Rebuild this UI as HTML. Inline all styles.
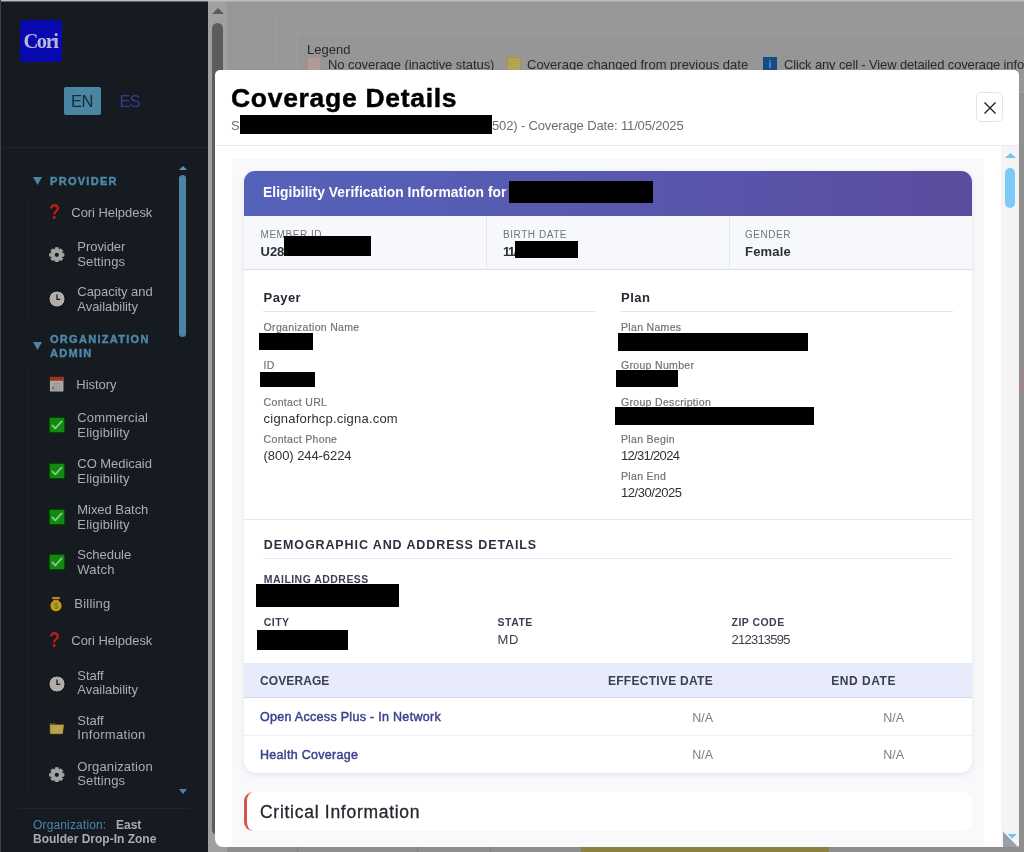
<!DOCTYPE html>
<html lang="en">
<head>
<meta charset="utf-8">
<title>Coverage Details</title>
<style>
*{box-sizing:border-box;margin:0;padding:0}
html,body{width:1024px;height:852px;overflow:hidden;background:#939393;font-family:"Liberation Sans",sans-serif;}
.abs,.t{position:absolute;white-space:nowrap}
.t{line-height:1;}
#stage{will-change:transform;position:relative;width:1024px;height:852px;overflow:hidden;background:#939393}
/* ---------- sidebar ---------- */
#side{position:absolute;left:0;top:0;width:208px;height:852px;background:#161b22}
#side .nav{color:#abadaf;font-size:13px;letter-spacing:-.05px;margin-top:-.5px;margin-left:.3px}
#side .sec{color:#4d88a5;font-weight:bold;font-size:11px;letter-spacing:1.3px;-webkit-text-stroke:.45px #4d88a5}
/* ---------- main bg ---------- */
#main{position:absolute;left:208px;top:0;width:816px;height:852px;background:#979797}
.bgt{color:#2a2a2a;font-size:13px}
/* ---------- modal ---------- */
#modal{position:absolute;left:215px;top:70px;width:804px;height:777px;background:#fff;border-radius:5px 5px 3px 8px;overflow:hidden}
.lbl{color:#6e737a;font-size:10.5px;letter-spacing:.32px;-webkit-text-stroke:.2px #6e737a}
.val{color:#2d3037;font-size:13px;letter-spacing:.2px}
.cap{color:#3a4152;font-size:10.5px;font-weight:bold;letter-spacing:.45px}
.red{position:absolute;background:#000}
.th{color:#3a4050;font-size:12px;font-weight:bold;letter-spacing:.55px}
.cv{color:#3c408a;font-size:12.5px;font-weight:normal;letter-spacing:.3px;-webkit-text-stroke:.45px #3c408a}
.na{color:#7a7f88;font-size:12.5px}
</style>
</head>
<body>
<div id="stage">

<!-- ================= MAIN BACKGROUND (dimmed page) ================= -->
<div id="main">
  <div class="abs" style="left:0;top:0;width:19px;height:852px;background:#a0a0a0"></div>
  <div class="abs" style="left:4px;top:23px;width:11px;height:812px;background:#5c5c5c;border-radius:5.5px"></div>
  <svg class="abs" style="left:3.5px;top:8px" width="12" height="6"><path d="M0 6 L6 0 L12 6Z" fill="#5c5c5c"/></svg>
  <div class="abs" style="left:68px;top:11px;width:760px;height:1px;background:#9b9b9b"></div>
  <div class="abs" style="left:68px;top:11px;width:1px;height:60px;background:#9b9b9b"></div>
  <!-- bottom strip peeking below modal -->
  <div class="abs" style="left:19px;top:847px;width:797px;height:5px;background:#8e8e8e"></div>
  <div class="abs" style="left:373px;top:847px;width:248px;height:5px;background:#8b8141"></div>
  <div class="abs" style="left:89px;top:847px;width:1px;height:5px;background:#808080"></div>
  <div class="abs" style="left:209px;top:847px;width:1px;height:5px;background:#808080"></div>
  <div class="abs" style="left:282px;top:847px;width:1px;height:5px;background:#808080"></div>
  <!-- right strip peeking beside modal -->
  <div class="abs" style="left:811px;top:93px;width:5px;height:754px;background:#8f8f8f"></div>
  <div class="abs" style="left:811px;top:364px;width:5px;height:28px;background:#9b8a8a"></div>
  <!-- legend box -->
  <div class="abs" style="left:89px;top:33px;width:740px;height:60px;border:1px solid #9e9e9e;background:#969696"></div>
  <div class="t bgt" style="left:99px;top:43px">Legend</div>
  <div class="abs" style="left:99px;top:57px;width:14px;height:14px;background:#b39a9a;border:1px solid #a58f8f"></div>
  <div class="t bgt" style="left:120px;top:58px;letter-spacing:-.07px">No coverage (inactive status)</div>
  <div class="abs" style="left:299px;top:57px;width:14px;height:14px;background:#b3a455;border:1px solid #a39649"></div>
  <div class="t bgt" style="left:319px;top:58px">Coverage changed from previous date</div>
  <div class="abs" style="left:555px;top:57px;width:14px;height:14px;background:#134c86"></div>
  <div class="t" style="left:560.5px;top:59px;font-size:11px;font-weight:bold;color:#5f8fc0">i</div>
  <div class="t bgt" style="left:576px;top:58px;letter-spacing:-.14px">Click any cell - View detailed coverage information</div>
</div>

<!-- ================= SIDEBAR ================= -->
<div id="side">
  <div class="abs" style="left:20px;top:20px;width:42px;height:42px;background:#0909b0;border-radius:4px"></div>
  <div class="t" style="left:23.400px;top:31px;font-family:'Liberation Serif',serif;font-weight:bold;font-size:20.5px;color:#b9b9da;letter-spacing:-1.400px">Cori</div>
  <div class="abs" style="left:64px;top:87px;width:37px;height:28px;background:#4a86a4;border-radius:2px"></div>
  <div class="t" style="left:71px;top:93px;font-size:16.5px;color:#1b2838;letter-spacing:-.4px">EN</div>
  <div class="t" style="left:119.5px;top:93px;font-size:16.5px;color:#3a3a8c;letter-spacing:-1px">ES</div>
  <div class="abs" style="left:0;top:147px;width:208px;height:1px;background:#1e242c"></div>

  <div class="abs" style="left:27px;top:196px;width:1px;height:125px;background:#1a2028"></div>
  <div class="abs" style="left:27px;top:368px;width:1px;height:428px;background:#1a2028"></div>
  <!-- inner scrollbar -->
  <svg class="abs" style="left:179px;top:165.500px" width="8" height="4"><path d="M0 4 L4 0 L8 4Z" fill="#5f95b0"/></svg>
  <div class="abs" style="left:179px;top:175px;width:7px;height:162px;background:#4a86a4;border-radius:4px"></div>
  <svg class="abs" style="left:179px;top:789px" width="8" height="5"><path d="M0 0 L4 5 L8 0Z" fill="#4a86a4"/></svg>

  <!-- PROVIDER -->
  <svg class="abs" style="left:33px;top:177px" width="9" height="8"><path d="M0 0 L9 0 L4.5 8Z" fill="#4a86a4"/></svg>
  <div class="t sec" style="left:50px;top:176.300px">PROVIDER</div>

  <div class="t nav" style="left:71px;top:206px">Cori Helpdesk</div>
  <div class="t nav" style="left:77px;top:240px">Provider</div>
  <div class="t nav" style="left:77px;top:255px;letter-spacing:.1px">Settings</div>
  <div class="t nav" style="left:77px;top:285px">Capacity and</div>
  <div class="t nav" style="left:77px;top:300px">Availability</div>

  <svg class="abs" style="left:33px;top:342px" width="9" height="8"><path d="M0 0 L9 0 L4.5 8Z" fill="#4a86a4"/></svg>
  <div class="t sec" style="left:50px;top:334.200px">ORGANIZATION</div>
  <div class="t sec" style="left:50px;top:348px">ADMIN</div>

  <div class="t nav" style="left:76px;top:378px">History</div>
  <div class="t nav" style="left:77px;top:411px;letter-spacing:0.15px">Commercial</div>
  <div class="t nav" style="left:77px;top:426px;letter-spacing:0.17px">Eligibility</div>
  <div class="t nav" style="left:77px;top:457px">CO Medicaid</div>
  <div class="t nav" style="left:77px;top:472px;letter-spacing:0.17px">Eligibility</div>
  <div class="t nav" style="left:77px;top:503px">Mixed Batch</div>
  <div class="t nav" style="left:77px;top:518px;letter-spacing:0.17px">Eligibility</div>
  <div class="t nav" style="left:77px;top:548px">Schedule</div>
  <div class="t nav" style="left:77px;top:563px;letter-spacing:0.2px">Watch</div>
  <div class="t nav" style="left:74px;top:597px;letter-spacing:0.22px">Billing</div>
  <div class="t nav" style="left:71px;top:634px">Cori Helpdesk</div>
  <div class="t nav" style="left:77px;top:669px">Staff</div>
  <div class="t nav" style="left:77px;top:683px">Availability</div>
  <div class="t nav" style="left:77px;top:714px">Staff</div>
  <div class="t nav" style="left:77px;top:728px;letter-spacing:0.3px">Information</div>
  <div class="t nav" style="left:77px;top:760px;letter-spacing:0.15px">Organization</div>
  <div class="t nav" style="left:77px;top:774px;letter-spacing:.1px">Settings</div>


  <!-- icons -->
  <div class="t" style="left:48.5px;top:201.5px;font-size:21.5px;font-weight:bold;color:#b3201d;text-shadow:0 0 1.5px #400;transform:scaleX(.84);transform-origin:0 0">?</div>
  <svg class="abs" style="left:49.2px;top:246.7px" width="15.6" height="15.6" viewBox="0 0 17 17"><path d="M16.25 6.96 L16.25 10.04 L14.60 10.07 L13.92 11.71 L15.07 12.89 L12.89 15.07 L11.71 13.92 L10.07 14.60 L10.04 16.25 L6.96 16.25 L6.93 14.60 L5.29 13.92 L4.11 15.07 L1.93 12.89 L3.08 11.71 L2.40 10.07 L0.75 10.04 L0.75 6.96 L2.40 6.93 L3.08 5.29 L1.93 4.11 L4.11 1.93 L5.29 3.08 L6.93 2.40 L6.96 0.75 L10.04 0.75 L10.07 2.40 L11.71 3.08 L12.89 1.93 L15.07 4.11 L13.92 5.29 L14.60 6.93Z" fill="#a3a3a3" stroke="#a3a3a3" stroke-width="1" stroke-linejoin="round"/><circle cx="8.5" cy="8.5" r="2.3" fill="#14171c"/></svg>
  <svg class="abs" style="left:48px;top:290.2px" width="18" height="18" viewBox="0 0 18 18"><circle cx="9" cy="9" r="8.1" fill="#b2acaa" stroke="#0b0d10" stroke-width="1"/><path d="M9 4.600 V9.300 H12.200" stroke="#1a1a1a" stroke-width="1.3" fill="none"/></svg>
  <svg class="abs" style="left:49.3px;top:376.300px" width="15.400" height="16.400" viewBox="0 0 16 17"><rect x=".5" y=".5" width="15" height="16" rx="1.200" fill="#a9a9a9" stroke="#0f1114" stroke-width=".8"/><path d="M.9 1.700 Q.9 .9 1.700 .9 H14.300 Q15.100 .9 15.100 1.700 V5 H.9Z" fill="#a2301d"/><path d="M3 8.300 H13 M3 11 H13 M3 13.800 H13 M5.600 6.300 V15 M8.300 6.300 V15 M11 6.300 V15" stroke="#939393" stroke-width=".7"/><rect x="3.200" y="11.300" width="2.200" height="2.200" fill="#6c6c6c"/></svg>
  <svg class="abs" style="left:48.400px;top:415.900px" width="18" height="18" viewBox="0 0 18 18"><rect x=".9" y=".9" width="16.200" height="16.200" rx="1" fill="#128a12" stroke="#052c05" stroke-width="1.500"/><path d="M4.400 9.300 L7.300 12.300 L13.700 5.400" stroke="#8acb8a" stroke-width="1.700" fill="none" stroke-linecap="round" stroke-linejoin="round"/></svg>
  <svg class="abs" style="left:48.400px;top:461.900px" width="18" height="18" viewBox="0 0 18 18"><rect x=".9" y=".9" width="16.200" height="16.200" rx="1" fill="#128a12" stroke="#052c05" stroke-width="1.500"/><path d="M4.400 9.300 L7.300 12.300 L13.700 5.400" stroke="#8acb8a" stroke-width="1.700" fill="none" stroke-linecap="round" stroke-linejoin="round"/></svg>
  <svg class="abs" style="left:48.400px;top:507.900px" width="18" height="18" viewBox="0 0 18 18"><rect x=".9" y=".9" width="16.200" height="16.200" rx="1" fill="#128a12" stroke="#052c05" stroke-width="1.500"/><path d="M4.400 9.300 L7.300 12.300 L13.700 5.400" stroke="#8acb8a" stroke-width="1.700" fill="none" stroke-linecap="round" stroke-linejoin="round"/></svg>
  <svg class="abs" style="left:48.400px;top:553px" width="18" height="18" viewBox="0 0 18 18"><rect x=".9" y=".9" width="16.200" height="16.200" rx="1" fill="#128a12" stroke="#052c05" stroke-width="1.500"/><path d="M4.400 9.300 L7.300 12.300 L13.700 5.400" stroke="#8acb8a" stroke-width="1.700" fill="none" stroke-linecap="round" stroke-linejoin="round"/></svg>
  <svg class="abs" style="left:48px;top:595px" width="16" height="19" viewBox="0 0 16 19"><circle cx="8" cy="10.800" r="6.200" fill="#c8991f" stroke="#1c1400" stroke-width="1.100"/><path d="M4.600 4.200 L5.700 6 H10.300 L11.400 4.200Z" fill="#b88a1a"/><rect x="3.800" y="1.700" width="8.400" height="2.600" rx=".8" fill="#c9ab4e" stroke="#1c1400" stroke-width=".9"/><text x="8" y="13.900" font-family="Liberation Sans, sans-serif" font-weight="bold" font-size="8.500" text-anchor="middle" fill="#5d8a18">$</text></svg>
  <div class="t" style="left:48.5px;top:629.5px;font-size:21.5px;font-weight:bold;color:#b3201d;text-shadow:0 0 1.5px #400;transform:scaleX(.84);transform-origin:0 0">?</div>
  <svg class="abs" style="left:48px;top:674.7px" width="18" height="18" viewBox="0 0 18 18"><circle cx="9" cy="9" r="8.1" fill="#b2acaa" stroke="#0b0d10" stroke-width="1"/><path d="M9 4.600 V9.300 H12.200" stroke="#1a1a1a" stroke-width="1.3" fill="none"/></svg>
  <svg class="abs" style="left:49px;top:723px" width="16" height="12" viewBox="0 0 16 12"><path d="M.6 .6 H6 L7.2 1.800 H14.6 V3 H.6Z" fill="#a88c32"/><path d="M.5 1.2 H15.4 L14 11.3 H.8Z" fill="#b7a248" stroke="#15130c" stroke-width=".7"/><path d="M4 4 L11 3.600 L10.400 8.600 L4.600 8.800Z" fill="#bfa64f" opacity=".8"/></svg>
  <svg class="abs" style="left:49.2px;top:766.7px" width="15.6" height="15.6" viewBox="0 0 17 17"><path d="M16.25 6.96 L16.25 10.04 L14.60 10.07 L13.92 11.71 L15.07 12.89 L12.89 15.07 L11.71 13.92 L10.07 14.60 L10.04 16.25 L6.96 16.25 L6.93 14.60 L5.29 13.92 L4.11 15.07 L1.93 12.89 L3.08 11.71 L2.40 10.07 L0.75 10.04 L0.75 6.96 L2.40 6.93 L3.08 5.29 L1.93 4.11 L4.11 1.93 L5.29 3.08 L6.93 2.40 L6.96 0.75 L10.04 0.75 L10.07 2.40 L11.71 3.08 L12.89 1.93 L15.07 4.11 L13.92 5.29 L14.60 6.93Z" fill="#a3a3a3" stroke="#a3a3a3" stroke-width="1" stroke-linejoin="round"/><circle cx="8.5" cy="8.5" r="2.3" fill="#14171c"/></svg>
  <div class="abs" style="left:18px;top:808px;width:172px;height:1px;background:#1e242c"></div>
  <div class="t" style="left:33px;top:819px;font-size:12px;color:#4a86a4;letter-spacing:.15px">Organization:</div>
  <div class="t" style="left:116px;top:819px;font-size:12px;color:#aaacae;font-weight:bold">East</div>
  <div class="t" style="left:33px;top:833px;font-size:12px;color:#aaacae;font-weight:bold">Boulder Drop-In Zone</div>
</div>

<div class="abs" style="left:0;top:0;width:1024px;height:1px;background:#b9c0b9"></div>
<div class="abs" style="left:0;top:1px;width:1024px;height:1px;background:rgba(185,192,185,.45)"></div>
<div class="abs" style="left:0;top:0;width:1px;height:852px;background:#3d4249"></div>

<!-- ================= MODAL ================= -->
<div id="modal">
  <!-- header -->
  <div class="t" id="ttl" style="left:16px;top:14.5px;font-size:26.5px;font-weight:bold;color:#000;letter-spacing:.7px;-webkit-text-stroke:.45px #000">Coverage Details</div>
  <div class="t" style="left:16px;top:49px;font-size:13px;color:#6e6e6e">S</div>
  <div class="red" style="left:25px;top:45px;width:252px;height:19px"></div>
  <div class="t" id="sub" style="left:277px;top:49px;font-size:13px;color:#6e6e6e;letter-spacing:-.15px">502) - Coverage Date: 11/05/2025</div>
  <div class="abs" style="left:761px;top:22px;width:27px;height:30px;border:1px solid #e4e4e4;border-radius:5px;background:#fff"></div>
  <svg class="abs" style="left:769px;top:32px" width="12" height="12" viewBox="0 0 12 12"><path d="M0.5 0.5 L11.5 11.5 M11.5 0.5 L0.5 11.5" stroke="#222" stroke-width="1.4" fill="none"/></svg>
  <div class="abs" style="left:0;top:75px;width:804px;height:1px;background:#e9e9e9"></div>

  <!-- scroll track -->
  <div class="abs" style="left:786px;top:76px;width:18px;height:701px;background:#f4f4f4"></div>
  <svg class="abs" style="left:790px;top:83px" width="11" height="5"><path d="M0 5 L5.5 0 L11 5Z" fill="#6fc5ef"/></svg>
  <div class="abs" style="left:790px;top:98px;width:10px;height:40px;background:#7ccbf6;border-radius:5px"></div>
  <svg class="abs" style="left:787px;top:756px" width="17" height="21"><path d="M1 5.500 L1 21 L16 21Z" fill="#9a9fb0"/><path d="M5.500 8 L15 8 L10.250 12.600Z" fill="#6fc5ef"/></svg>

  <!-- body bg -->
  <div class="abs" style="left:16.500px;top:89px;width:752.500px;height:688px;background:#f8f9fb"></div>

  <!-- main card -->
  <div class="abs" id="card" style="left:29px;top:101px;width:728px;height:602px;background:#fff;border-radius:11px;box-shadow:0 2px 6px rgba(40,50,90,.09),0 0 1px rgba(40,50,90,.15);overflow:hidden">
    <div class="abs" style="left:0;top:0;width:728px;height:45px;background:linear-gradient(90deg,#5562b9 0%,#5759af 50%,#5b4c9f 100%)"></div>
    <div class="t" id="ch" style="left:19px;top:15px;font-size:13.8px;font-weight:bold;color:#fff;letter-spacing:.05px">Eligibility Verification Information for</div>
    <div class="red" style="left:265px;top:10px;width:144px;height:22px"></div>

    <div class="abs" style="left:0;top:45px;width:728px;height:53px;background:#f7f8fc"></div>
    <div class="abs" style="left:0;top:98px;width:728px;height:1px;background:#d9ddee"></div>
    <div class="abs" style="left:242px;top:45px;width:1px;height:53px;background:#e4e7f2"></div>
    <div class="abs" style="left:485px;top:45px;width:1px;height:53px;background:#e4e7f2"></div>

    <div class="t" style="left:16.500px;top:59px;font-size:10px;color:#6f747d;letter-spacing:.55px">MEMBER ID</div>
    <div class="t" style="left:16.500px;top:73.5px;font-size:13px;color:#2a2f3a;font-weight:bold">U28</div>
    <div class="red" style="left:40px;top:65px;width:87px;height:20px"></div>
    <div class="t" style="left:259px;top:59px;font-size:10px;color:#6f747d;letter-spacing:.55px">BIRTH DATE</div>
    <div class="t" style="left:259px;top:73.5px;font-size:13px;color:#2a2f3a;font-weight:bold;letter-spacing:-1.5px">11/</div>
    <div class="red" style="left:271px;top:70px;width:63px;height:17px"></div>
    <div class="t" style="left:501px;top:59px;font-size:10px;color:#6f747d;letter-spacing:.55px">GENDER</div>
    <div class="t" style="left:501px;top:73.5px;font-size:13px;color:#2a2f3a;font-weight:bold;letter-spacing:.2px">Female</div>

    <!-- Payer -->
    <div class="t" style="left:19.600px;top:120px;font-size:13px;font-weight:bold;color:#252a36;letter-spacing:.4px">Payer</div>
    <div class="abs" style="left:19px;top:140px;width:332px;height:1px;background:#dfe4f0"></div>
    <div class="t lbl" style="left:19.600px;top:151px">Organization Name</div>
    <div class="red" style="left:15px;top:162px;width:54px;height:17px"></div>
    <div class="t lbl" style="left:19.600px;top:189px">ID</div>
    <div class="red" style="left:16px;top:201px;width:55px;height:15px"></div>
    <div class="t lbl" style="left:19.600px;top:226px">Contact URL</div>
    <div class="t val" style="left:19.600px;top:240.5px">cignaforhcp.cigna.com</div>
    <div class="t lbl" style="left:19.600px;top:263px">Contact Phone</div>
    <div class="t val" style="left:19.600px;top:278px;letter-spacing:-.07px">(800) 244-6224</div>

    <!-- Plan -->
    <div class="t" style="left:377px;top:120px;font-size:13px;font-weight:bold;color:#252a36;letter-spacing:.5px">Plan</div>
    <div class="abs" style="left:377px;top:140px;width:332px;height:1px;background:#dfe4f0"></div>
    <div class="t lbl" style="left:377px;top:151px">Plan Names</div>
    <div class="red" style="left:374px;top:162px;width:190px;height:18px"></div>
    <div class="t lbl" style="left:377px;top:189px">Group Number</div>
    <div class="red" style="left:372px;top:199px;width:62px;height:17px"></div>
    <div class="t lbl" style="left:377px;top:226px">Group Description</div>
    <div class="red" style="left:371px;top:236px;width:199px;height:18px"></div>
    <div class="t lbl" style="left:377px;top:263px">Plan Begin</div>
    <div class="t val" style="left:377px;top:278px;letter-spacing:-.68px">12/31/2024</div>
    <div class="t lbl" style="left:377px;top:300px">Plan End</div>
    <div class="t val" style="left:377px;top:315px;letter-spacing:-.45px">12/30/2025</div>

    <div class="abs" style="left:0;top:348px;width:728px;height:1px;background:#e4e7ef"></div>

    <!-- Demographic -->
    <div class="t" style="left:19.800px;top:367.7px;font-size:12.5px;font-weight:bold;color:#2b3040;letter-spacing:.9px">DEMOGRAPHIC AND ADDRESS DETAILS</div>
    <div class="abs" style="left:19px;top:387px;width:690px;height:1px;background:#e3e6f0"></div>
    <div class="t cap" style="left:19.800px;top:403px">MAILING ADDRESS</div>
    <div class="red" style="left:12px;top:413px;width:143px;height:23px"></div>
    <div class="t cap" style="left:19.800px;top:446px">CITY</div>
    <div class="red" style="left:13px;top:459px;width:91px;height:20px"></div>
    <div class="t cap" style="left:253.600px;top:446px">STATE</div>
    <div class="t val" style="left:253.600px;top:462.4px;color:#3a3f4a;letter-spacing:.6px">MD</div>
    <div class="t cap" style="left:487.600px;top:446px">ZIP CODE</div>
    <div class="t val" style="left:487.600px;top:462.4px;color:#3a3f4a;letter-spacing:-.78px">212313595</div>

    <!-- Coverage table -->
    <div class="abs" style="left:0;top:492px;width:728px;height:34px;background:#e8ebfb"></div>
    <div class="abs" style="left:0;top:526px;width:728px;height:1px;background:#d3d8f1"></div>
    <div class="t th" style="left:16px;top:504px;letter-spacing:.1px">COVERAGE</div>
    <div class="t th" style="right:259px;top:504px;letter-spacing:.28px">EFFECTIVE DATE</div>
    <div class="t th" style="right:76px;top:504px">END DATE</div>
    <div class="t cv" style="left:16px;top:540px">Open Access Plus - In Network</div>
    <div class="t na" style="right:259px;top:541px">N/A</div>
    <div class="t na" style="right:68px;top:541px">N/A</div>
    <div class="abs" style="left:0;top:564px;width:728px;height:1px;background:#f1f2f6"></div>
    <div class="t cv" style="left:16px;top:578px">Health Coverage</div>
    <div class="t na" style="right:259px;top:578px">N/A</div>
    <div class="t na" style="right:68px;top:578px">N/A</div>
  </div>

  <!-- Critical Information -->
  <div class="abs" style="left:29px;top:722px;width:728px;height:39px;background:#fff;border-radius:9px;border-left:3px solid #d9534f"></div>
  <div class="t" id="crit" style="left:45px;top:734.1px;font-size:17.5px;color:#23272f;letter-spacing:.72px;-webkit-text-stroke:.3px #23272f">Critical Information</div>
</div>

</div>
</body>
</html>
